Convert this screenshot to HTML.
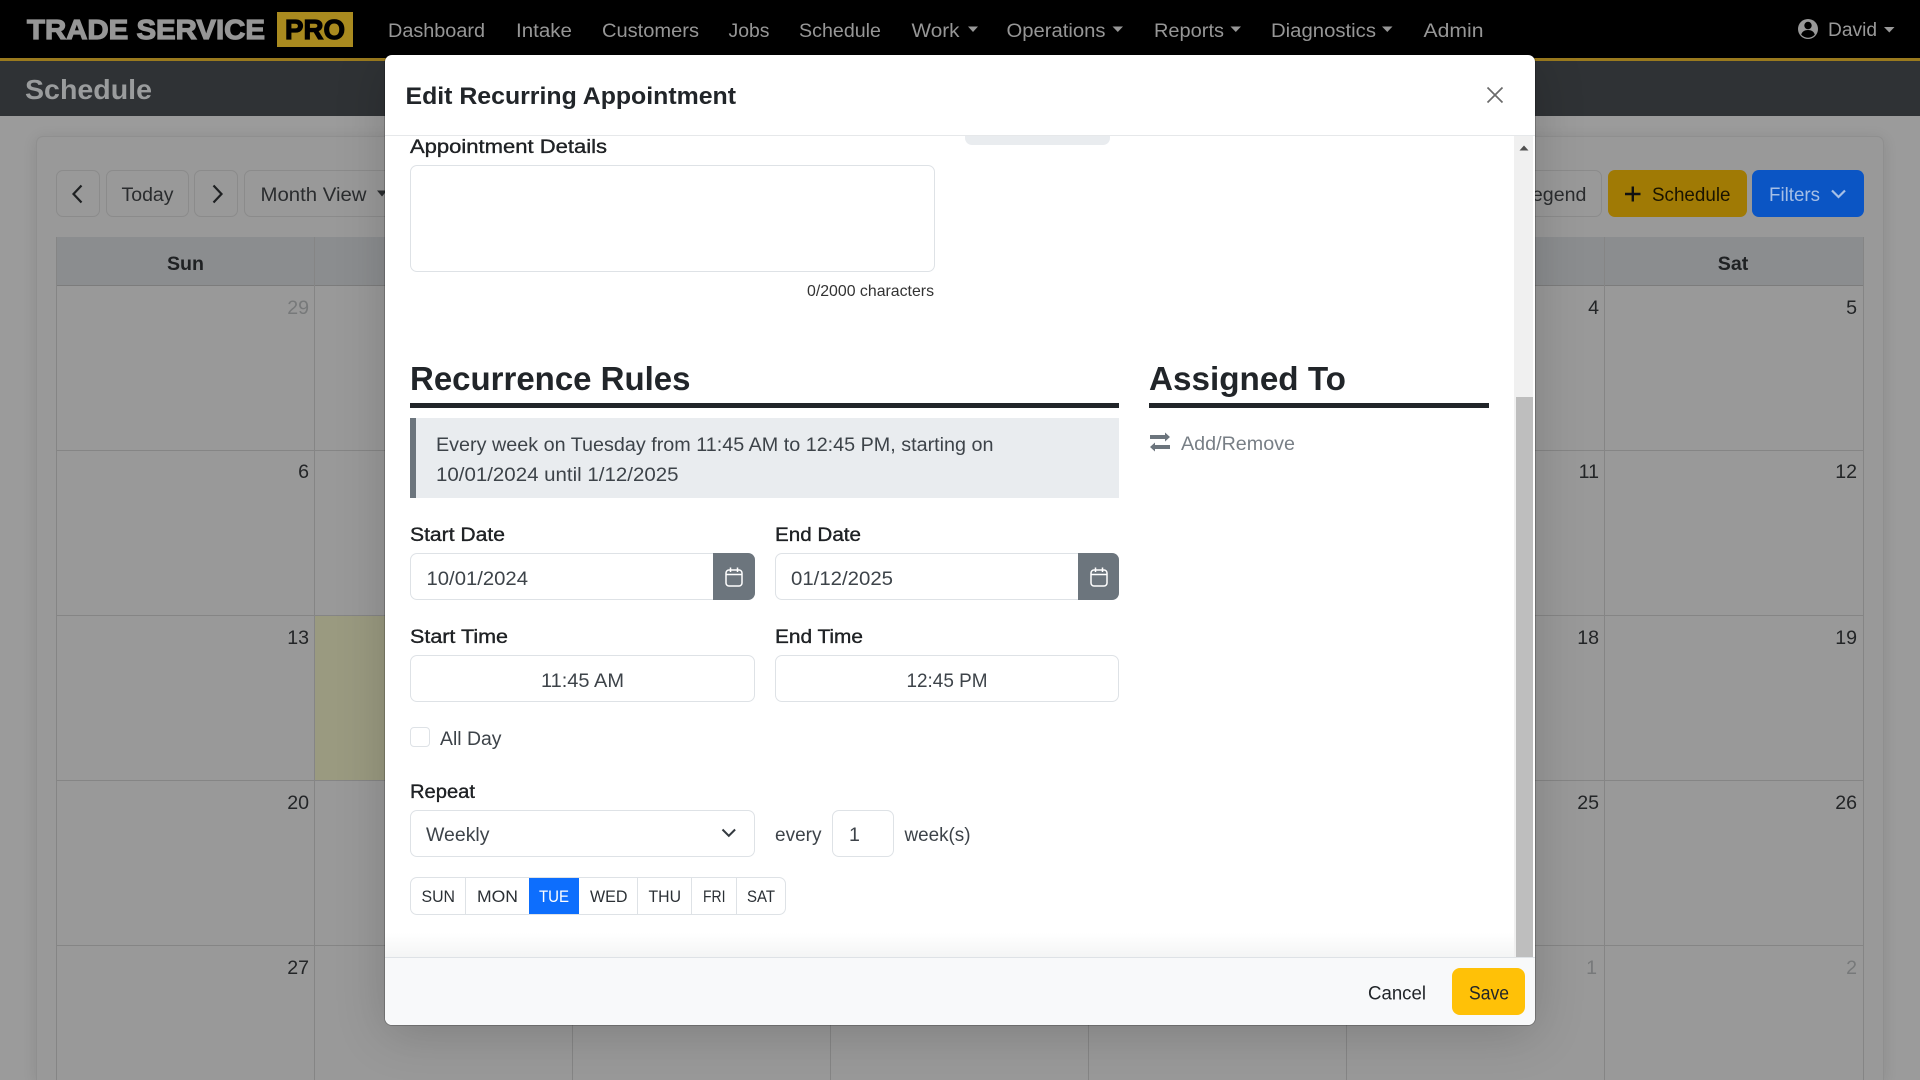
<!DOCTYPE html>
<html lang="en"><head><meta charset="utf-8"><title>Schedule</title>
<style>
html,body{margin:0;padding:0;width:1920px;height:1080px;overflow:hidden;background:#9b9b9b;font-family:"Liberation Sans",sans-serif}
#page{position:relative;width:1920px;height:1080px;overflow:hidden;background:#9b9b9b}
.a{position:absolute;box-sizing:border-box}
svg{position:absolute;left:0;top:0;width:1920px;height:1080px;overflow:hidden}
svg text{font-family:"Liberation Sans",sans-serif;font-size:19.6px;white-space:pre}
.n{fill:#999}
.b{font-weight:700}
.m{stroke:currentColor;stroke-width:.3px}
.btn{border:1px solid #8b8b8b;border-radius:7px;top:170px;height:47px}
.inp{background:#fff;border:1px solid #dee2e6;border-radius:7px}
</style></head><body>
<div id="page">

<div class="a" style="left:0;top:0;width:1920px;height:58px;background:#000"></div>
<div class="a" style="left:0;top:58px;width:1920px;height:3px;background:#9a7a1e"></div>
<div class="a" style="left:0;top:61px;width:1920px;height:55px;background:#2f3235"></div>
<div class="a" style="left:277px;top:12px;width:76px;height:35px;background:#a98a1f"></div>

<div class="a" style="left:36px;top:136px;width:1848px;height:944px;background:#999;border:1px solid #8f8f8f;border-bottom:0;border-radius:7px 7px 0 0;box-shadow:0 2px 14px rgba(0,0,0,.1)"></div>
<div class="a" style="left:56px;top:237px;width:1808px;height:49px;background:#8b8d8f;border-bottom:1px solid #7c7c7c"></div>
<div class="a" style="left:314px;top:615px;width:71px;height:165px;background:#9a9a80"></div>

<div class="a btn" style="left:56px;width:44px"></div>
<div class="a btn" style="left:106px;width:83px"></div>
<div class="a btn" style="left:194px;width:44px"></div>
<div class="a btn" style="left:244px;width:180px"></div>
<div class="a btn" style="left:1480px;width:122px"></div>
<div class="a" style="left:1608px;top:170px;width:139px;height:47px;background:#a07a05;border-radius:7px"></div>
<div class="a" style="left:1752px;top:170px;width:112px;height:47px;background:#0b55c4;border-radius:7px"></div>

<svg viewBox="0 0 1920 1080">
<g stroke="#858585" stroke-width="1" fill="none">
<path d="M56.5 237V1080M314.5 237V1080M572.5 237V1080M830.5 237V1080M1088.5 237V1080M1346.5 237V1080M1604.5 237V1080M1863.5 237V1080"/>
<path d="M56 450.5H1864M56 615.5H1864M56 780.5H1864M56 945.5H1864"/>
</g>
<text x="27" y="39" class="b" style="font-size:28px;fill:#969696;stroke:#969696;stroke-width:1.2px" textLength="238" lengthAdjust="spacingAndGlyphs">TRADE SERVICE</text>
<text x="285" y="39" class="b" style="font-size:28px;fill:#000;stroke:#000;stroke-width:1.2px" textLength="60" lengthAdjust="spacingAndGlyphs">PRO</text>
<g class="n">
<text x="388" y="37" textLength="97" lengthAdjust="spacingAndGlyphs" class="n">Dashboard</text>
<text x="516" y="37" textLength="56" lengthAdjust="spacingAndGlyphs" class="n">Intake</text>
<text x="602" y="37" textLength="97" lengthAdjust="spacingAndGlyphs" class="n">Customers</text>
<text x="728.5" y="37" textLength="41" lengthAdjust="spacingAndGlyphs" class="n">Jobs</text>
<text x="799" y="37" textLength="82" lengthAdjust="spacingAndGlyphs" class="n">Schedule</text>
<text x="911.5" y="37" textLength="48" lengthAdjust="spacingAndGlyphs" class="n">Work</text>
<text x="1006.5" y="37" textLength="99" lengthAdjust="spacingAndGlyphs" class="n">Operations</text>
<text x="1154" y="37" textLength="70" lengthAdjust="spacingAndGlyphs" class="n">Reports</text>
<text x="1271" y="37" textLength="105" lengthAdjust="spacingAndGlyphs" class="n">Diagnostics</text>
<text x="1423.5" y="37" textLength="60" lengthAdjust="spacingAndGlyphs" class="n">Admin</text>
<text x="1828" y="36" textLength="49" lengthAdjust="spacingAndGlyphs" class="n">David</text>
</g>
<g fill="#999">
<path d="M968 26.5h10l-5 5.5zM1112.5 26.5h10.5l-5.2 5.5zM1230.5 26.5h10.5l-5.2 5.5zM1382 26.5h10.5l-5.2 5.5zM1884 27h10.5l-5.2 5.5z"/>
<circle cx="1808" cy="29" r="10"/>
</g>
<circle cx="1808" cy="25.5" r="3.7" fill="#000"/>
<path d="M1801.2 34.6c1-3.2 3.5-4.6 6.8-4.6s5.8 1.4 6.8 4.6a9 9 0 0 1-13.6 0z" fill="#000"/>

<text x="25" y="99" class="b" style="font-size:28px;fill:#9a9c9d" textLength="127" lengthAdjust="spacingAndGlyphs">Schedule</text>

<g fill="none" stroke="#1e2022" stroke-width="2.2">
<path d="M81.5 185.5l-8 8.500 8 8.500M213.500 185.500l8 8.500-8 8.500"/>
</g>
<g fill="#2a2c2e">
<text x="121.500" y="201" textLength="52" lengthAdjust="spacingAndGlyphs">Today</text>
<text x="260.500" y="201" textLength="106" lengthAdjust="spacingAndGlyphs">Month View</text>
<path d="M377 190.500h10l-5 6z"/>
<text x="1521" y="201">Legend</text>
<text x="1652" y="201" fill="#1a1400" textLength="78.500" lengthAdjust="spacingAndGlyphs">Schedule</text>
</g>
<path d="M1625 194h15.500M1632.800 186.500v15" stroke="#111" stroke-width="2.400"/>
<text x="1769" y="201" fill="#a6bfe6" textLength="51" lengthAdjust="spacingAndGlyphs">Filters</text>
<path d="M1832 190.500l6.500 6.500 6.500-6.500" fill="none" stroke="#a6bfe6" stroke-width="2.200"/>

<g class="b" fill="#1f2123">
<text x="185.500" y="270" text-anchor="middle">Sun</text>
<text x="1733" y="270" text-anchor="middle">Sat</text>
</g>
<g text-anchor="end" fill="#77797a">
<text x="309" y="314">29</text>
<text x="1597" y="974">1</text>
<text x="1857" y="974">2</text>
</g>
<g text-anchor="end" fill="#232527">
<text x="309" y="478">6</text><text x="309" y="644">13</text><text x="309" y="809">20</text><text x="309" y="974">27</text>
<text x="1599" y="314">4</text><text x="1857" y="314">5</text>
<text x="1599" y="478">11</text><text x="1857" y="478">12</text>
<text x="1599" y="644">18</text><text x="1857" y="644">19</text>
<text x="1599" y="809">25</text><text x="1857" y="809">26</text>
</g>
</svg>

<!-- Modal -->
<div class="a" style="left:385px;top:55px;width:1150px;height:970px;background:#fff;border-radius:7px;box-shadow:0 0 0 1px rgba(0,0,0,.2),0 8px 50px rgba(0,0,0,.18)"></div>
<div class="a" style="left:385px;top:135px;width:1150px;height:1px;background:#e6e8ea"></div>
<div class="a" style="left:965px;top:136px;width:145px;height:9px;background:#e9ecef;border-radius:0 0 7px 7px"></div>
<div class="a" style="left:1514px;top:136px;width:19px;height:821px;background:#f0f0f0"></div>
<div class="a" style="left:1516px;top:397px;width:17px;height:560px;background:#bebebe"></div>
<div class="a" style="left:385px;top:933px;width:1129px;height:24px;background:linear-gradient(#fff,#f4f5f5)"></div>
<div class="a" style="left:385px;top:957px;width:1150px;height:68px;background:#f8f9fa;border-top:1px solid #dee2e6;border-radius:0 0 7px 7px"></div>
<div class="a inp" style="left:410px;top:165px;width:525px;height:107px"></div>
<div class="a" style="left:410px;top:403px;width:709px;height:5px;background:#212529"></div>
<div class="a" style="left:1149px;top:403px;width:340px;height:5px;background:#212529"></div>
<div class="a" style="left:410px;top:418px;width:709px;height:80px;background:#e9ecef;border-left:6px solid #6c757d"></div>

<div class="a inp" style="left:410px;top:553px;width:345px;height:47px"></div>
<div class="a" style="left:713px;top:553px;width:42px;height:47px;background:#6c757d;border-radius:0 7px 7px 0"></div>
<div class="a inp" style="left:775px;top:553px;width:344px;height:47px"></div>
<div class="a" style="left:1078px;top:553px;width:41px;height:47px;background:#6c757d;border-radius:0 7px 7px 0"></div>
<div class="a inp" style="left:410px;top:655px;width:345px;height:47px"></div>
<div class="a inp" style="left:775px;top:655px;width:344px;height:47px"></div>
<div class="a inp" style="left:410px;top:727px;width:20px;height:20px;border-radius:4px"></div>
<div class="a inp" style="left:410px;top:810px;width:345px;height:47px"></div>
<div class="a inp" style="left:832px;top:810px;width:62px;height:47px"></div>
<div class="a inp" style="left:410px;top:877px;width:376px;height:38px"></div>
<div class="a" style="left:529px;top:878px;width:50px;height:36px;background:#0d6efd"></div>
<div class="a" style="left:465px;top:878px;width:1px;height:36px;background:#dee2e6"></div>
<div class="a" style="left:637px;top:878px;width:1px;height:36px;background:#dee2e6"></div>
<div class="a" style="left:691px;top:878px;width:1px;height:36px;background:#dee2e6"></div>
<div class="a" style="left:736px;top:878px;width:1px;height:36px;background:#dee2e6"></div>
<div class="a" style="left:1452px;top:968px;width:73px;height:47px;background:#ffc107;border-radius:8px"></div>

<svg viewBox="0 0 1920 1080">
<text x="405.500" y="104" class="b" style="font-size:24px" fill="#212529" textLength="330.500" lengthAdjust="spacingAndGlyphs">Edit Recurring Appointment</text>
<path d="M1487.500 87.500l15 15M1502.500 87.500l-15 15" stroke="#6a6a6a" stroke-width="1.700" fill="none"/>
<path d="M1524 145.500l4.500 5h-9z" fill="#505050"/>

<g fill="#212529">
<text x="410" y="153" class="m" textLength="197" lengthAdjust="spacingAndGlyphs">Appointment Details</text>
<text x="807" y="296" fill="#333" style="font-size:15.700px" textLength="127" lengthAdjust="spacingAndGlyphs">0/2000 characters</text>
<text x="410" y="390" class="b" style="font-size:33px" textLength="280.500" lengthAdjust="spacingAndGlyphs">Recurrence Rules</text>
<text x="1149" y="390" class="b" style="font-size:33px" textLength="197" lengthAdjust="spacingAndGlyphs">Assigned To</text>
<text x="410" y="541" class="m" textLength="95" lengthAdjust="spacingAndGlyphs">Start Date</text>
<text x="775" y="541" class="m" textLength="86" lengthAdjust="spacingAndGlyphs">End Date</text>
<text x="410" y="643" class="m" textLength="98" lengthAdjust="spacingAndGlyphs">Start Time</text>
<text x="775" y="643" class="m" textLength="88" lengthAdjust="spacingAndGlyphs">End Time</text>
<text x="410" y="798" class="m" textLength="65" lengthAdjust="spacingAndGlyphs">Repeat</text>
</g>
<g fill="#3d4349">
<text x="436" y="451" textLength="557.500" lengthAdjust="spacingAndGlyphs">Every week on Tuesday from 11:45 AM to 12:45 PM, starting on</text>
<text x="436" y="481" textLength="242.500" lengthAdjust="spacingAndGlyphs">10/01/2024 until 1/12/2025</text>
<text x="426.500" y="585" textLength="101.500" lengthAdjust="spacingAndGlyphs">10/01/2024</text>
<text x="791" y="585" textLength="102" lengthAdjust="spacingAndGlyphs">01/12/2025</text>
<text x="541" y="687" textLength="83" lengthAdjust="spacingAndGlyphs">11:45 AM</text>
<text x="906.500" y="687" textLength="81" lengthAdjust="spacingAndGlyphs">12:45 PM</text>
<text x="440" y="745" textLength="61.500" lengthAdjust="spacingAndGlyphs">All Day</text>
<text x="426" y="841" textLength="63.500" lengthAdjust="spacingAndGlyphs">Weekly</text>
<text x="775" y="841" textLength="46.500" lengthAdjust="spacingAndGlyphs">every</text>
<text x="849" y="841">1</text>
<text x="904.500" y="841" textLength="66" lengthAdjust="spacingAndGlyphs">week(s)</text>
</g>
<path d="M722.500 829.500l6.300 6.300 6.300-6.300" fill="none" stroke="#343a40" stroke-width="2"/>

<g fill="none" stroke="#fff" stroke-width="1.500">
<rect x="726" y="570" width="16" height="16" rx="3"/><path d="M726 574.500h16M730.500 567.500v4.500M737.500 567.500v4.500"/>
<rect x="1091" y="570" width="16" height="16" rx="3"/><path d="M1091 574.500h16M1095.500 567.500v4.500M1102.500 567.500v4.500"/>
</g>
<path d="M1150 435h15v-2.500l5 4.500-5 4.500v-2.500h-15zM1170 445h-15v-2.500l-5 4.500 5 4.500v-2.500h15z" fill="#6c757d"/>
<text x="1181" y="450" fill="#787f86" textLength="114" lengthAdjust="spacingAndGlyphs">Add/Remove</text>

<g fill="#2b3035">
<text x="421.500" y="902" style="font-size:17px" textLength="33.500" lengthAdjust="spacingAndGlyphs">SUN</text>
<text x="477" y="902" style="font-size:17px" textLength="41" lengthAdjust="spacingAndGlyphs">MON</text>
<text x="539" y="902" style="font-size:17px" fill="#fff" textLength="30" lengthAdjust="spacingAndGlyphs">TUE</text>
<text x="590" y="902" style="font-size:17px" textLength="37.500" lengthAdjust="spacingAndGlyphs">WED</text>
<text x="648.500" y="902" style="font-size:17px" textLength="32.500" lengthAdjust="spacingAndGlyphs">THU</text>
<text x="703" y="902" style="font-size:17px" textLength="22.500" lengthAdjust="spacingAndGlyphs">FRI</text>
<text x="747" y="902" style="font-size:17px" textLength="28" lengthAdjust="spacingAndGlyphs">SAT</text>
</g>
<text x="1368" y="999.500" fill="#212529" textLength="58" lengthAdjust="spacingAndGlyphs">Cancel</text>
<text x="1469" y="999.500" fill="#212529" textLength="40" lengthAdjust="spacingAndGlyphs">Save</text>
</svg>
</div>
</body></html>
